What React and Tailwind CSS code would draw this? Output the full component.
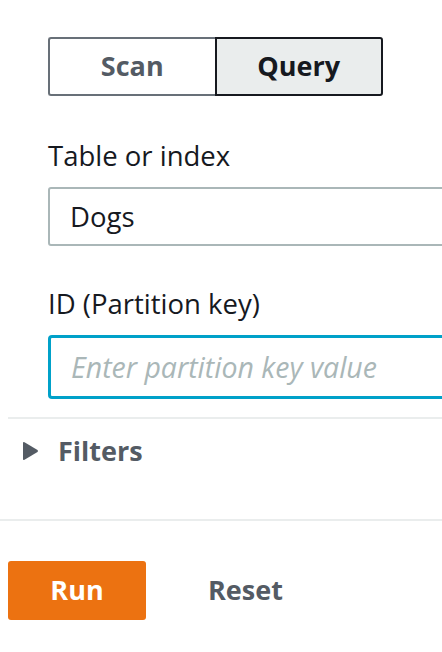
export default function App() {
  const font = { fontFamily: '"Open Sans", "Noto Sans", sans-serif' };
  return (
    <div className="w-[442px] h-[652px] overflow-hidden bg-white" style={font}>
      <div className="pl-[48px] pt-[37px]">
        <div className="flex w-[335px] h-[59px]">
          <div className="flex-1 flex items-center justify-center border-2 border-r-0 border-[#687078] rounded-l-[3px] text-[27px] font-bold text-[#545b64]">
            Scan
          </div>
          <div className="flex-1 flex items-center justify-center border-2 border-[#16191f] rounded-r-[3px] bg-[#eaeded] text-[27px] font-bold text-[#16191f]">
            Query
          </div>
        </div>
        <div className="mt-[44px] text-[27.5px] leading-[32px] text-[#16191f]">Table or index</div>
        <div className="mt-[15px] w-[520px] h-[59px] border-2 border-[#aab7b8] rounded-[3px] flex items-center pl-[20px] text-[27.5px] text-[#16191f]">
          Dogs
        </div>
        <div className="mt-[42px] text-[27.5px] leading-[32px] text-[#16191f]">ID (Partition key)</div>
        <div className="mt-[15px] w-[520px] h-[64px] border-[3px] border-[#00a1c9] rounded-[4px] flex items-center pl-[20px] text-[28.5px] italic text-[#aab7b8]">
          Enter partition key value
        </div>
      </div>
      <div className="ml-[8px] mt-[18px] h-[2px] bg-[#eaeded]"></div>
      <div className="flex items-center h-[64px] pl-[22px]">
        <svg width="17" height="20" viewBox="0 0 17 20" className="shrink-0">
          <path d="M1 2 Q1 0.5 2.5 1.3 L15.5 9 Q16.5 10 15.5 11 L2.5 18.7 Q1 19.5 1 18 Z" fill="#545b64" />
        </svg>
        <span className="ml-[19px] text-[27px] font-bold text-[#545b64]">Filters</span>
      </div>
      <div className="mt-[36px] h-[2px] bg-[#eaeded]"></div>
      <div className="flex items-center pl-[8px] mt-[40px]">
        <div className="w-[138px] h-[59px] bg-[#ec7211] rounded-[3px] flex items-center justify-center text-[27px] font-bold text-white">
          Run
        </div>
        <div className="ml-[62px] text-[27px] font-bold text-[#545b64]">Reset</div>
      </div>
    </div>
  );
}
